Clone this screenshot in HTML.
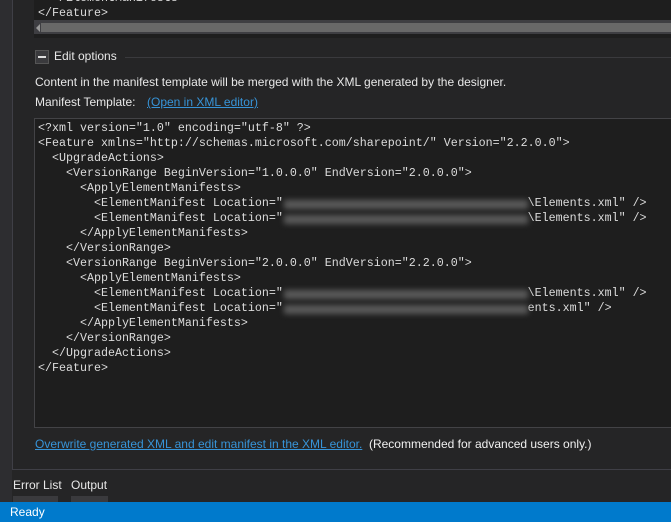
<!DOCTYPE html><html><head><style>
body{margin:0;width:671px;height:522px;background:#252526;overflow:hidden;position:relative;font-family:"Liberation Sans",sans-serif;color:#e8e8e8;font-size:12px}
.abs{position:absolute}
.code{font-family:"Liberation Mono",monospace;font-size:11.67px;line-height:15px;color:#dcdcdc;white-space:pre}
a{color:#3794d8;text-decoration:underline}
.blur{position:absolute;background:#5a5a5a;filter:blur(3px);height:9px}
</style></head><body>
<div class="abs" style="left:0;top:0;width:12px;height:502px;background:#2d2d30"></div>
<div class="abs" style="left:12px;top:0;width:1px;height:470px;background:#3f3f46"></div>
<div class="abs" style="left:34px;top:0;width:637px;height:38px;background:#1e1e1e"></div>
<div class="abs code" style="left:38px;top:-9px">  &lt;/ElementManifests&gt;
&lt;/Feature&gt;</div>
<div class="abs" style="left:34px;top:20px;width:637px;height:14px;background:#3e3e42"></div>
<div class="abs" style="left:41px;top:23px;width:630px;height:9px;background:#686868"></div>
<div class="abs" style="left:36px;top:24px;width:0;height:0;border-right:4px solid #999;border-top:4px solid transparent;border-bottom:4px solid transparent"></div>
<div class="abs" style="left:35px;top:50px;width:12px;height:12px;background:#3a3a3d;border:1px solid #555"></div>
<div class="abs" style="left:38px;top:56px;width:8px;height:2px;background:#ddd"></div>
<div class="abs" style="left:54px;top:49px;font-size:12px">Edit options</div>
<div class="abs" style="left:125px;top:57px;width:546px;height:1px;background:#3a3a3d"></div>
<div class="abs" style="left:35px;top:75px">Content in the manifest template will be merged with the XML generated by the designer.</div>
<div class="abs" style="left:35px;top:95px">Manifest Template:</div>
<div class="abs" style="left:147px;top:95px"><a>(Open in XML editor)</a></div>
<div class="abs" style="left:34px;top:118px;width:640px;height:308px;background:#1e1e1e;border:1px solid #434346"></div>
<div class="abs code" style="left:38px;top:121px">&lt;?xml version="1.0" encoding="utf-8" ?&gt;
&lt;Feature xmlns="http://schemas.microsoft.com/sharepoint/" Version="2.2.0.0"&gt;
  &lt;UpgradeActions&gt;
    &lt;VersionRange BeginVersion="1.0.0.0" EndVersion="2.0.0.0"&gt;
      &lt;ApplyElementManifests&gt;
        &lt;ElementManifest Location="                                   \Elements.xml" /&gt;
        &lt;ElementManifest Location="                                   \Elements.xml" /&gt;
      &lt;/ApplyElementManifests&gt;
    &lt;/VersionRange&gt;
    &lt;VersionRange BeginVersion="2.0.0.0" EndVersion="2.2.0.0"&gt;
      &lt;ApplyElementManifests&gt;
        &lt;ElementManifest Location="                                   \Elements.xml" /&gt;
        &lt;ElementManifest Location="                                   ents.xml" /&gt;
      &lt;/ApplyElementManifests&gt;
    &lt;/VersionRange&gt;
  &lt;/UpgradeActions&gt;
&lt;/Feature&gt;</div>
<div class="blur" style="left:284px;top:200px;width:244px"></div>
<div class="blur" style="left:284px;top:215px;width:244px"></div>
<div class="blur" style="left:284px;top:290px;width:244px"></div>
<div class="blur" style="left:284px;top:305px;width:244px"></div>
<div class="abs" style="left:35px;top:437px"><a>Overwrite generated XML and edit manifest in the XML editor.</a> <span style="color:#f0f0f0">&nbsp;(Recommended for advanced users only.)</span></div>
<div class="abs" style="left:12px;top:469px;width:659px;height:1px;background:#3f3f46"></div>
<div class="abs" style="left:13px;top:478px">Error List</div>
<div class="abs" style="left:71px;top:478px">Output</div>
<div class="abs" style="left:13px;top:496px;width:45px;height:6px;background:#3a3a3d"></div>
<div class="abs" style="left:71px;top:496px;width:37px;height:6px;background:#3a3a3d"></div>
<div class="abs" style="left:0;top:502px;width:671px;height:20px;background:#007acc"></div>
<div class="abs" style="left:10px;top:505px;color:#fff">Ready</div>
</body></html>
